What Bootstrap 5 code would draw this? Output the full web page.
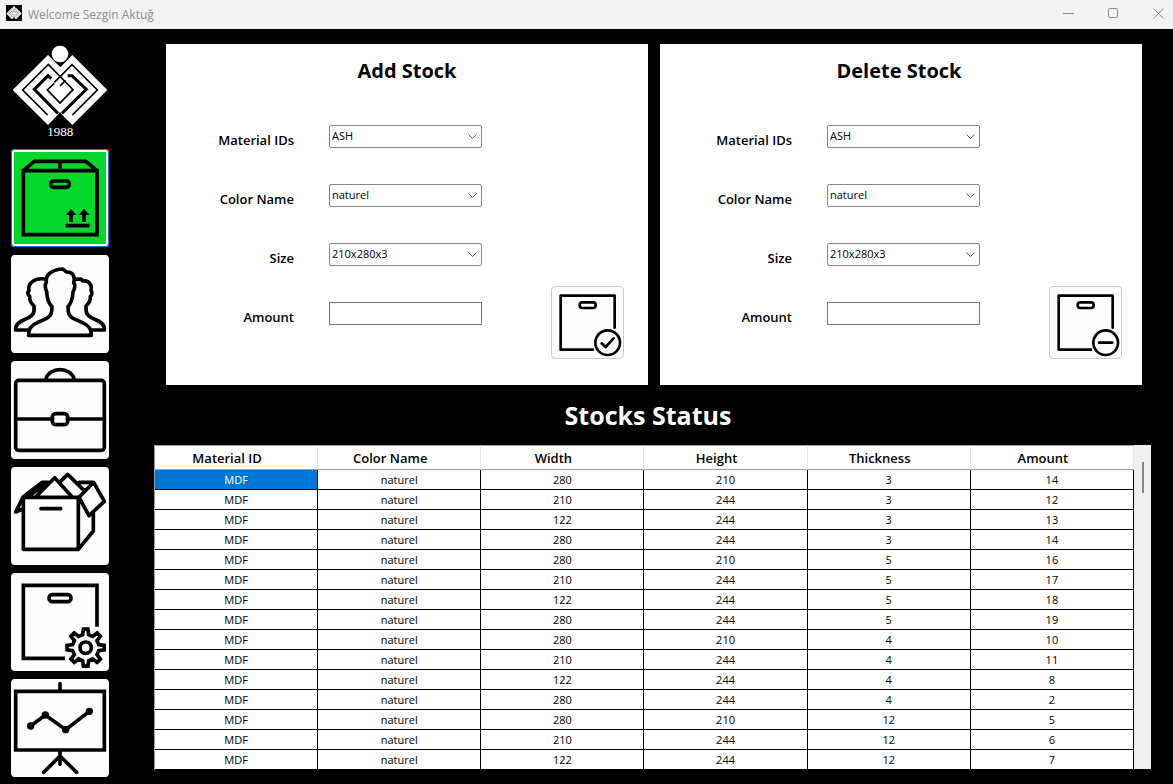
<!DOCTYPE html>
<html lang="en">
<head>
<meta charset="utf-8">
<meta name="viewport" content="width=device-width, initial-scale=1">
<title>Welcome Sezgin Aktuğ</title>
<link href="https://cdn.jsdelivr.net/npm/bootstrap@5.3.0/dist/css/bootstrap.min.css" rel="stylesheet">
<style>
  body { font-family: "Open Sans", "Noto Sans", sans-serif; font-size: 11px; background: #000; color: #000; }
  .titlebar { height: 29px; background: #f3f3f3; color: #8c8c8c; padding-left: 6px; font-size: 12px; gap: 6px; }
  .titlebar .app-icon { background: #000; margin-bottom: 3px; }
  .titlebar .caption-btn { width: 45px; height: 27px; padding: 0; border: 0; background: none; display: flex; align-items: center; justify-content: center; margin-bottom: 2px; }
  .titlebar .caption-close { width: 37px; justify-content: flex-end; padding-right: 9px; }
  .sidebar { width: 154px; padding: 14px 0 0 11px; }
  .sidebar .logo { width: 98px; height: 98px; margin-bottom: 8px; }
  .tool { width: 98px; height: 98px; padding: 0; border: 0; border-radius: 4px; background: #fdfdfd; display: block; overflow: hidden; }
  .tool.active { background: #04d62c; box-shadow: inset 0 0 0 1px #0078d4, inset 0 0 0 3px #fff; }
  .tool svg, .submit-btn svg { display: block; width: 100%; height: 100%; }
  .line { fill: none; stroke: #000; stroke-width: 11; stroke-linejoin: round; stroke-linecap: round; }
  .line.square { stroke-linejoin: miter; stroke-linecap: butt; }
  .line.slim { stroke-width: 8; }
  .workspace { padding: 15px 22px 0 0; min-width: 0; }
  .upper { padding-right: 9px; }
  .panels { padding-left: 12px; gap: 12px; }
  .panel { flex: 1 1 0; background: #fff; padding-bottom: 26px; }
  .panel h2 { font-size: 20px; line-height: 28px; font-weight: 700; padding-top: 13px; margin-bottom: 40px; }
  .panel-delete h2 { padding-right: 4px; }
  .fields { gap: 36px; padding-bottom: 34px; }
  .fields label { font-size: 13px; line-height: 16px; font-weight: 600; padding: 7px 35px 0 0; }
  .fields .control { width: 153px; height: 23px; border: 1px solid #7a7a7a; border-radius: 0; background-color: #fff; color: #000; font-size: 11px; line-height: 16px; padding: 0 2px 2px; }
  .fields select.control { appearance: none; border-radius: 2px; border-color: #868686; background: #fff url("data:image/svg+xml,%3Csvg xmlns='http://www.w3.org/2000/svg' viewBox='0 0 9 6'%3E%3Cpath d='M.5 .5l4 4 4-4' fill='none' stroke='%23606060'/%3E%3C/svg%3E") no-repeat right 4px center / 9px 6px; }
  .submit-btn { width: 73px; height: 73px; padding: 0; border: 1px solid #ccc; border-radius: 4px; background: #fdfdfd; margin: 0 24px 0 69px; }
  .panel-delete .submit-btn { margin-right: 20px; }
  .status-title { font-size: 25px; line-height: 36px; font-weight: 700; color: #fff; padding: 12px 0; }
  .stock { width: 100%; table-layout: fixed; border-collapse: separate; border-spacing: 0; background: #fff; border-left: 1px solid #a0a0a0; line-height: 16px; text-align: center; }
  .stock th { height: 25px; padding: 1px 18px 0 0; font-size: 13px; font-weight: 600; border-top: 1px solid #a0a0a0; border-bottom: 1px solid #a0a0a0; border-right: 1px solid #e5e5e5; }
  .stock td { height: 20px; padding: 0; border-right: 1px solid #000; border-bottom: 1px solid #000; }
  .stock td.selected { background: #0078d7; color: #fff; }
  .scroll-track { width: 17px; background: #f0f0f0; padding-top: 17px; margin-bottom: 1px; }
  .scroll-thumb { width: 2px; height: 31px; background: #858585; }
</style>
</head>
<body>
<svg width="0" height="0" class="d-none">
  <symbol id="emblem" viewBox="33 132 294 294">
    <circle cx="180" cy="162" r="25" fill="#fff"/>
    <path d="M144 165L181 202L217 165L322 270L217 375L189 347L180 336L172 346L144 375L38 270Z" fill="#fff"/>
    <g fill="none" stroke="#000">
      <path stroke-width="5" d="M143 345L68 270L145 193L219 269L180 309L142 270L163 250M217 345L292 270L216 194L163 247M180 258L197 241"/>
      <path stroke-width="9" d="M154 236L144 227L103 268L174 340M203 227L216 227L259 268L186 340"/>
    </g>
  </symbol>
</svg>

<header class="titlebar d-flex align-items-center">
  <svg width="16" height="16" class="app-icon"><use href="#emblem" y="1"/></svg>
  <span class="flex-grow-1">Welcome Sezgin Aktuğ</span>
  <div class="d-flex">
    <button class="caption-btn" aria-label="Minimize"><svg width="11" height="11" stroke="#8c8c8c" fill="none"><path d="M0 5.5h11"/></svg></button>
    <button class="caption-btn" aria-label="Maximize"><svg width="11" height="11" stroke="#8c8c8c" fill="none"><rect x=".5" y=".5" width="9" height="9" rx="1"/></svg></button>
    <button class="caption-btn caption-close" aria-label="Close"><svg width="11" height="11" stroke="#8c8c8c" fill="none"><path d="M.5 .5l10 10M10.5 .5l-10 10"/></svg></button>
  </div>
</header>

<div class="d-flex">
  <nav class="sidebar flex-shrink-0" aria-label="Sections">
    <svg class="logo d-block" viewBox="33 129 294 294">
      <use href="#emblem" x="33" y="132" width="294" height="294"/>
      <text x="181" y="407" text-anchor="middle" fill="#fff" font-family="Liberation Serif, serif" font-size="39">1988</text>
    </svg>
    <div class="d-flex flex-column gap-2">
      <button class="tool active" aria-label="Stock">
        <svg viewBox="33 12 294 294"><g class="line square"><path d="M70 77H291V269H70ZM70 77L103 49H257L291 77M180 49V77"/><rect x="152" y="108" width="56" height="19" rx="9"/><path d="M197 242H269M213 231V203M252 231V203"/></g><path d="M197 210L213 192L229 210ZM236 210L252 192L268 210Z"/></svg>
      </button>
      <button class="tool" aria-label="Users">
        <svg viewBox="33 15 294 294"><g class="line"><path d="M86 256H274C275 232 262 224 247 218L219 205C207 198 204 190 204 170C213 160 218 149 219 126C227 111 225 103 221 99C227 75 215 65 199 66L189 57C158 58 135 73 139 97C134 105 134 112 140 125C141 147 145 160 156 170C156 190 153 197 140 205L112 218C97 224 85 234 86 256Z"/><path d="M133 87C104 83 82 100 87 122C81 128 84 136 89 139C88 151 93 160 102 168C104 190 99 195 86 203L65 213C51 220 46 228 47 240H87M226 88L242 87L249 93C267 91 277 105 273 121C278 128 275 136 271 140C272 151 267 160 258 168C257 190 261 195 274 203L295 213C309 220 314 228 313 240H273"/></g></svg>
      </button>
      <button class="tool" aria-label="Jobs">
        <svg viewBox="33 15 294 294"><g class="line"><rect x="47" y="73" width="266" height="210" rx="9"/><path d="M137 72C141 52 160 41 180 41S219 52 223 72M47 189H158M202 189H313"/><rect x="157" y="173" width="46" height="33" rx="10"/></g></svg>
      </button>
      <button class="tool" aria-label="Open box">
        <svg viewBox="33 21 294 294"><g class="line"><path d="M70 112H235V268H70ZM235 268L280 213V158M70 110L47 156L68 147M70 110L127 67H145L84 110M110 108L164 53L214 108M178 68L203 43L252 91M238 67H281L313 124L267 167L237 112L281 67"/><path d="M123 146H182"/></g></svg>
      </button>
      <button class="tool" aria-label="Stock settings">
        <svg viewBox="33 15 294 294"><g class="line square"><path d="M195 271H70V52H291V176"/><rect x="147" y="80" width="66" height="21" rx="10"/><circle cx="257" cy="239" r="17"/><path id="gear"/></g></svg>
      </button>
      <button class="tool" aria-label="Reports">
        <svg viewBox="33 15 294 294"><g class="line"><path stroke-linejoin="miter" d="M47 52H313V228H47ZM180 29V47M180 232V271M180 246L131 295M180 246L230 295M92 156L136 123L197 167L268 112"/></g><circle cx="92" cy="156" r="11"/><circle cx="136" cy="123" r="11"/><circle cx="197" cy="167" r="11"/><circle cx="268" cy="112" r="11"/></svg>
      </button>
    </div>
  </nav>

  <main class="workspace flex-grow-1">
    <div class="upper">
      <div class="panels d-flex">
        <form class="panel">
          <h2 class="text-center">Add Stock</h2>
          <div class="d-flex align-items-end">
            <div class="fields d-flex flex-column flex-grow-1">
              <div class="d-flex"><label for="addMat" class="flex-grow-1 text-end">Material IDs</label><select id="addMat" class="control"><option>ASH</option><option>MDF</option></select></div>
              <div class="d-flex"><label for="addCol" class="flex-grow-1 text-end">Color Name</label><select id="addCol" class="control"><option>naturel</option></select></div>
              <div class="d-flex"><label for="addSize" class="flex-grow-1 text-end">Size</label><select id="addSize" class="control"><option>210x280x3</option></select></div>
              <div class="d-flex"><label for="addAmt" class="flex-grow-1 text-end">Amount</label><input id="addAmt" class="control" type="text"></div>
            </div>
            <button type="button" class="submit-btn" aria-label="Add stock"><svg viewBox="36 21 213 213"><g class="line slim"><path d="M159 209H62V47H224V143"/><rect x="119" y="67" width="48" height="17" rx="8"/><circle cx="203" cy="188" r="37"/><path d="M185 190L197 201L221 175"/></g></svg></button>
          </div>
        </form>
        <form class="panel panel-delete">
          <h2 class="text-center">Delete Stock</h2>
          <div class="d-flex align-items-end">
            <div class="fields d-flex flex-column flex-grow-1">
              <div class="d-flex"><label for="delMat" class="flex-grow-1 text-end">Material IDs</label><select id="delMat" class="control"><option>ASH</option><option>MDF</option></select></div>
              <div class="d-flex"><label for="delCol" class="flex-grow-1 text-end">Color Name</label><select id="delCol" class="control"><option>naturel</option></select></div>
              <div class="d-flex"><label for="delSize" class="flex-grow-1 text-end">Size</label><select id="delSize" class="control"><option>210x280x3</option></select></div>
              <div class="d-flex"><label for="delAmt" class="flex-grow-1 text-end">Amount</label><input id="delAmt" class="control" type="text"></div>
            </div>
            <button type="button" class="submit-btn" aria-label="Delete stock"><svg viewBox="36 21 213 213"><g class="line slim"><path d="M159 209H62V47H224V143"/><rect x="119" y="67" width="48" height="17" rx="8"/><circle cx="203" cy="188" r="37"/><path d="M183 188H223"/></g></svg></button>
          </div>
        </form>
      </div>
      <h1 class="status-title text-center mb-0">Stocks Status</h1>
    </div>
    <div class="d-flex">
      <div class="flex-grow-1">
        <table class="stock">
          <thead><tr><th>Material ID</th><th>Color Name</th><th>Width</th><th>Height</th><th>Thickness</th><th>Amount</th></tr></thead>
          <tbody id="rows"></tbody>
        </table>
      </div>
      <div class="scroll-track flex-shrink-0 d-flex justify-content-center"><div class="scroll-thumb"></div></div>
    </div>
  </main>
</div>
<script src="https://cdn.jsdelivr.net/npm/bootstrap@5.3.0/dist/js/bootstrap.bundle.min.js"></script>
<script>
  const stock = [
    [280,210,3,14],[210,244,3,12],[122,244,3,13],[280,244,3,14],
    [280,210,5,16],[210,244,5,17],[122,244,5,18],[280,244,5,19],
    [280,210,4,10],[210,244,4,11],[122,244,4,8],[280,244,4,2],
    [280,210,12,5],[210,244,12,6],[122,244,12,7]
  ];
  document.getElementById('rows').innerHTML = stock.map((r, i) =>
    '<tr><td' + (i ? '' : ' class="selected"') + '>MDF</td><td>naturel</td>' +
    r.map(v => '<td>' + v + '</td>').join('') + '</tr>').join('');

  // Eight-toothed outline around (257, 239)
  const pts = [];
  for (let t = 0; t < 8; t++) {
    for (const [off, rad] of [[-13, 40], [-7, 56], [7, 56], [13, 40]]) {
      const a = (t * 45 + off) * Math.PI / 180;
      pts.push((257 + rad * Math.cos(a)).toFixed(1) + ' ' + (239 + rad * Math.sin(a)).toFixed(1));
    }
  }
  document.getElementById('gear').setAttribute('d', 'M' + pts.join('L') + 'Z');
</script>
</body>
</html>
